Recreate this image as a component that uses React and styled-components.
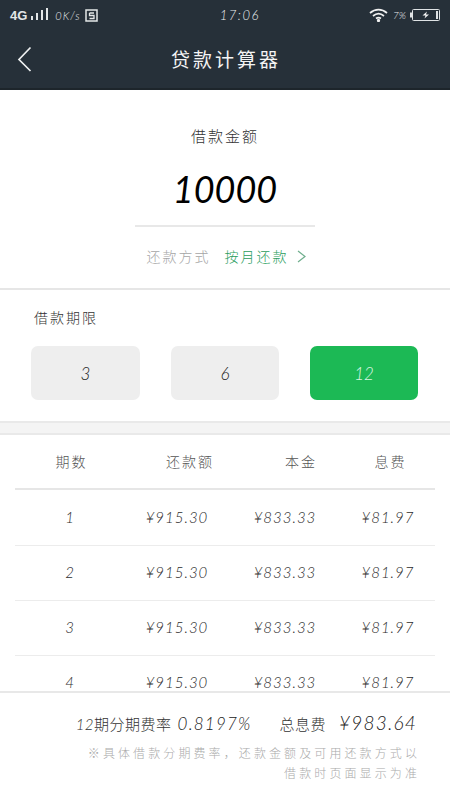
import React from "react";
import styled, { createGlobalStyle } from "styled-components";

const Global = createGlobalStyle`
  html, body { margin: 0; padding: 0; background: #fff; }
  * { box-sizing: border-box; }
`;
const cjk = `"Noto Sans CJK SC", "Noto Sans", sans-serif`;
const Page = styled.div`
  width: 450px; height: 800px; display: flex; flex-direction: column; overflow: hidden;
  font-family: ${cjk}; font-weight: 300; color: #333; background: #fff;
`;
const Num = styled.span`
  font-family: Lato, "Liberation Sans", sans-serif; font-style: italic; font-weight: 300;
`;
const Header = styled.header`
  flex: none; height: 90px; background: #263039; color: #f2f2f2;
  border-bottom: 2px solid #1d252b; display: flex; flex-direction: column;
`;
const StatusBar = styled.div`
  height: 30px; padding: 0 8px 0 10px; display: flex; align-items: center; justify-content: space-between;
  font-size: 12px; color: #eceff0;
`;
const StatusSide = styled.div`
  display: flex; align-items: center; gap: 4px;
`;
const NetType = styled.span`
  font-family: "Liberation Sans", sans-serif; font-size: 13px; font-weight: 700; color: #e4e7e8;
`;
const Speed = styled(Num)`font-size: 11px; letter-spacing: 1px; margin-left: 3px;`;
const Clock = styled(Num)`font-size: 13px; letter-spacing: 1.5px; margin-left: 12px;`;
const Percent = styled(Num)`font-size: 10px;`;
const Nav = styled.div`
  flex: 1; position: relative; display: flex; align-items: center; justify-content: center; padding-bottom: 2px;
`;
const Title = styled.h1`
  margin: 0 0 0 2px; font-size: 19px; font-weight: 400; letter-spacing: 3px; color: #f4f4f4; line-height: 1;
`;
const Back = styled.svg`
  position: absolute; left: 17px; top: 16px; width: 16px; height: 26px;
`;
const AmountSection = styled.section`
  flex: none; height: 200px; border-bottom: 2px solid #e6e6e6; display: flex; flex-direction: column; align-items: center;
`;
const AmountLabel = styled.div`
  margin-top: 35px; font-size: 15px; line-height: 22px; letter-spacing: 2px; color: #333;
`;
const AmountValue = styled(Num)`
  margin-top: 13px; width: 180px; height: 58px; text-align: center;
  font-size: 36px; line-height: 58px; letter-spacing: 0; color: #000; font-weight: 400;
`;
const Rule = styled.div`
  margin-top: 7px; width: 180px; height: 2px; background: #e8e8e8;
`;
const Method = styled.div`
  margin: 18px 0 0 2px; display: flex; align-items: center; font-size: 14px; line-height: 22px; letter-spacing: 2px; color: #a5a5a5;
`;
const MethodValue = styled.span`
  margin-left: 14px; color: #2a9d5c; display: flex; align-items: center; gap: 8px;
`;
const TermSection = styled.section`
  flex: none; height: 131px; display: flex; flex-direction: column;
`;
const TermLabel = styled.div`
  margin: 16px 0 0 34px; font-size: 14px; line-height: 22px; letter-spacing: 2px; color: #333;
`;
const TermGrid = styled.div`
  margin: 18px 0 0 31px; display: grid; grid-template-columns: 109px 108px 108px; column-gap: 31px;
`;
const TermButton = styled.div`
  height: 54px; border-radius: 7px; display: flex; align-items: center; justify-content: center; font-size: 17px;
  background: ${p => (p.$active ? "#1cb955" : "#eeeeee")};
  color: ${p => (p.$active ? "#d8f5e2" : "#222")};
`;
const Strip = styled.div`
  flex: none; height: 14px; background: #f4f4f4; border-top: 2px solid #e9e9e9; border-bottom: 2px solid #e9e9e9;
`;
const Table = styled.div`
  flex: 1; min-height: 0; overflow: hidden; padding: 0 15px;
`;
const HeadRow = styled.div`
  height: 55px; margin-bottom: 1px; display: grid; grid-template-columns: 113px 124px 98px 81px; align-items: center; text-align: center;
  border-bottom: 2px solid #e6e6e6; font-size: 14px; letter-spacing: 2px; color: #555; padding-bottom: 2px;
`;
const BodyRow = styled.div`
  height: 55px; padding-bottom: 3px; display: grid; grid-template-columns: 110px 104px 112px 94px; align-items: center; text-align: center;
  border-bottom: 1px solid #ececec; font-size: 15px; letter-spacing: 1px; color: #2c2c2c;
`;
const Footer = styled.footer`
  flex: none; height: 109px; border-top: 2px solid #e8e8e8; padding: 17px 33px 0 20px; text-align: right;
`;
const Summary = styled.div`
  display: flex; justify-content: flex-end; align-items: baseline; font-size: 15px; line-height: 26px; letter-spacing: 0.5px; color: #333;
`;
const SummaryValue = styled(Num)`
  font-size: ${p => p.$size}px; letter-spacing: 1.2px; color: #222; margin-left: ${p => p.$gap}px;
`;
const SummaryTail = styled.span`margin-left: 28px;`;
const Note = styled.div`
  margin-top: 6px; font-size: 12px; line-height: 20px; letter-spacing: 3.1px; color: #aaaaaa; margin-right: -3px;
`;

const rows = [1, 2, 3, 4];

export default function App() {
  return (
    <Page>
      <Global />
      <Header>
        <StatusBar>
          <StatusSide>
            <NetType>4G</NetType>
            <svg width="17" height="14" viewBox="0 0 17 14" fill="#e4e7e8">
              <rect x="0" y="8" width="2" height="4" /><rect x="5" y="5" width="2" height="7" />
              <rect x="10" y="2" width="2" height="10" /><rect x="15" y="0" width="2" height="12" />
            </svg>
            <Speed>0K/s</Speed>
            <svg width="14" height="14" viewBox="0 0 14 14" fill="none" stroke="#e4e7e8">
              <rect x="1" y="2" width="11" height="11" strokeWidth="1.5" />
              <path d="M4.5 5H9M4.5 5V7.5H9V10.5H4.5" strokeWidth="1.3" />
            </svg>
          </StatusSide>
          <Clock>17:06</Clock>
          <StatusSide>
            <svg width="20" height="14" viewBox="0 0 20 14" fill="none" stroke="#f0f0f0" strokeWidth="1.7">
              <path d="M1 5C6 0.5 13 0.5 18 5M4 8C7.5 5 11.5 5 15 8M7 10.5C8.5 9.5 10.5 9.5 12 10.5" />
              <circle cx="9.5" cy="12.5" r="0.8" fill="#f0f0f0" />
            </svg>
            <Percent>7%</Percent>
            <svg width="32" height="14" viewBox="0 0 32 14" fill="none">
              <rect x="2.5" y="1.5" width="27" height="11" rx="1" stroke="#dfe3e5" />
              <rect x="0" y="4.5" width="2" height="5" fill="#dfe3e5" />
              <rect x="26" y="3" width="2" height="8" fill="#dfe3e5" />
              <path d="M17 3.5L12.5 7.5H15.5L14.5 10.5L19 6.5H16Z" fill="#f4f4f4" />
            </svg>
          </StatusSide>
        </StatusBar>
        <Nav>
          <Back viewBox="0 0 16 26" fill="none" stroke="#eef0f1" strokeWidth="1.7">
            <path d="M13.5 1.5L2 13.5L13.5 25" />
          </Back>
          <Title>贷款计算器</Title>
        </Nav>
      </Header>

      <AmountSection>
        <AmountLabel>借款金额</AmountLabel>
        <AmountValue>10000</AmountValue>
        <Rule />
        <Method>
          还款方式
          <MethodValue>
            按月还款
            <svg width="9" height="13" viewBox="0 0 9 13" fill="none" stroke="#6fae8d" strokeWidth="1.2">
              <path d="M1 1L8 6.5L1 12" />
            </svg>
          </MethodValue>
        </Method>
      </AmountSection>

      <TermSection>
        <TermLabel>借款期限</TermLabel>
        <TermGrid>
          <TermButton><Num>3</Num></TermButton>
          <TermButton><Num>6</Num></TermButton>
          <TermButton $active><Num>12</Num></TermButton>
        </TermGrid>
      </TermSection>
      <Strip />

      <Table>
        <HeadRow>
          <span>期数</span><span>还款额</span><span>本金</span><span>息费</span>
        </HeadRow>
        {rows.map(n => (
          <BodyRow key={n}>
            <Num>{n}</Num>
            <Num>¥915.30</Num>
            <Num>¥833.33</Num>
            <Num>¥81.97</Num>
          </BodyRow>
        ))}
      </Table>

      <Footer>
        <Summary>
          <Num>12</Num>期分期费率
          <SummaryValue $size={17} $gap={6}>0.8197%</SummaryValue>
          <SummaryTail>总息费</SummaryTail>
          <SummaryValue $size={19} $gap={13}>¥983.64</SummaryValue>
        </Summary>
        <Note>
          ※具体借款分期费率，还款金额及可用还款方式以
          <br />
          借款时页面显示为准
        </Note>
      </Footer>
    </Page>
  );
}
